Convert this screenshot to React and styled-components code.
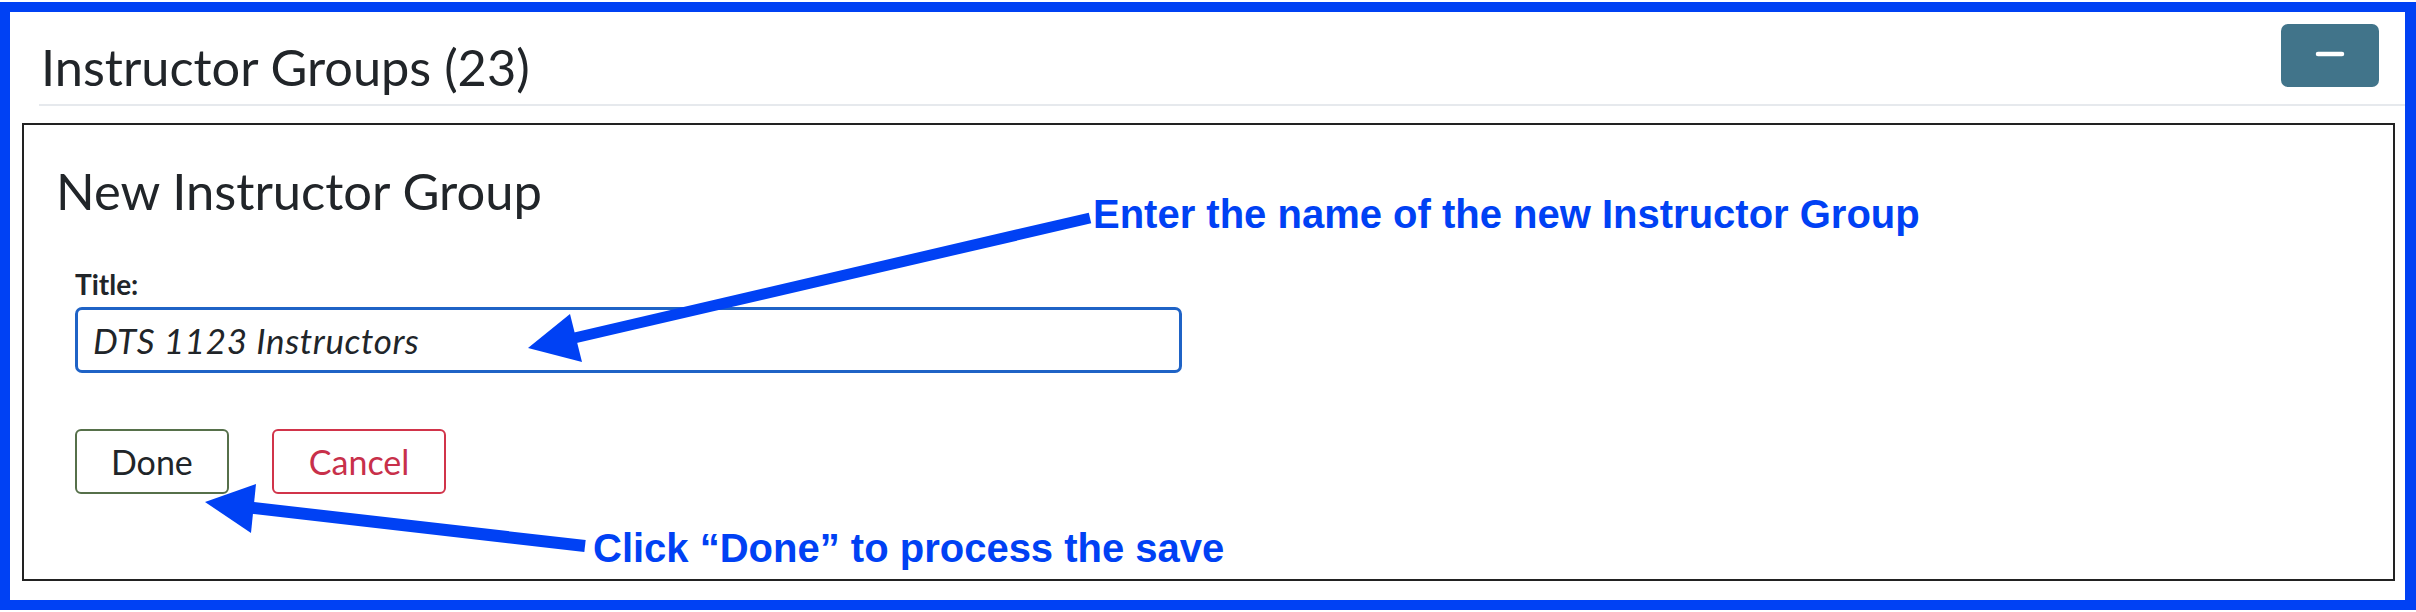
import styled, { createGlobalStyle } from 'styled-components'

const GlobalStyle = createGlobalStyle`
  html, body {
    margin: 0;
    padding: 0;
    background: #fff;
  }
  body {
    font-family: Lato, "Noto Sans", sans-serif;
    color: #212529;
  }
`

const Page = styled.div`
  position: relative;
  width: 2416px;
  height: 612px;
  padding-top: 2px;
  box-sizing: border-box;
`

const Frame = styled.div`
  height: 608px;
  box-sizing: border-box;
  border-style: solid;
  border-color: #0041f4;
  border-width: 10px 11px 10px 10px;
  display: flex;
  flex-direction: column;
`

const Header = styled.div`
  display: flex;
  justify-content: space-between;
  align-items: flex-start;
  height: 92px;
  margin-left: 29px;
  padding: 0 26px 0 2px;
  border-bottom: 2px solid #e6e9ed;
`

const Title = styled.h1`
  margin: 0;
  padding-top: 29px;
  font-size: 50.5px;
  font-weight: 400;
  line-height: 51px;
`

const CollapseButton = styled.button`
  margin-top: 12px;
  width: 98px;
  height: 63px;
  border: 0;
  border-radius: 7px;
  background: #41748a;
  display: flex;
  align-items: center;
  justify-content: center;
  padding: 0 0 4px;
`

const Card = styled.div`
  margin: 17px 10px 0 12px;
  height: 458px;
  box-sizing: border-box;
  border: 2px solid #222;
  padding: 0 0 0 32px;
`

const CardTitle = styled.h2`
  margin: 0;
  padding-top: 40px;
  font-size: 50.7px;
  font-weight: 400;
  line-height: 51px;
`

const Form = styled.div`
  margin: 51px 0 0 19px;
  display: flex;
  flex-direction: column;
`

const Label = styled.label`
  font-size: 28px;
  font-weight: 700;
  line-height: 34px;
`

const TitleInput = styled.div`
  margin-top: 6px;
  width: 1107px;
  height: 66px;
  box-sizing: border-box;
  border: 3px solid #1f63c6;
  border-radius: 7px;
  padding-left: 15px;
  display: flex;
  align-items: center;
  font-size: 35px;
  font-style: italic;
  letter-spacing: 0.6px;
`

const Actions = styled.div`
  margin-top: 56px;
  display: flex;
  gap: 43px;
`

const Button = styled.button`
  height: 65px;
  padding: 0 ${(p) => p.$pad}px;
  box-sizing: border-box;
  border: 2px solid ${(p) => p.$border};
  border-radius: 6px;
  background: #fff;
  color: ${(p) => p.$color};
  font-family: Lato, "Noto Sans", sans-serif;
  font-size: 34px;
`

const Note = styled.div`
  position: absolute;
  left: ${(p) => p.$x}px;
  top: ${(p) => p.$y}px;
  font-family: "Liberation Sans", Arial, sans-serif;
  font-weight: 700;
  font-size: 40px;
  line-height: 40px;
  color: #0041f4;
  white-space: nowrap;
`

const Overlay = styled.svg`
  position: absolute;
  left: 0;
  top: 0;
  pointer-events: none;
`

const App = () => {
  return (
    <Page>
      <GlobalStyle />
      <Frame>
        <Header>
          <Title>Instructor Groups (23)</Title>
          <CollapseButton aria-label="Collapse">
            <svg width="30" height="6" viewBox="0 0 30 6">
              <line x1="3" y1="3" x2="27" y2="3" stroke="#fff" strokeWidth="4.5" strokeLinecap="round" />
            </svg>
          </CollapseButton>
        </Header>
        <Card>
          <CardTitle>New Instructor Group</CardTitle>
          <Form>
            <Label>Title:</Label>
            <TitleInput>DTS 1123 Instructors</TitleInput>
            <Actions>
              <Button $border="#56704a" $color="#212529" $pad={34}>Done</Button>
              <Button $border="#d1344a" $color="#c8304a" $pad={35}>Cancel</Button>
            </Actions>
          </Form>
        </Card>
      </Frame>

      <Overlay width="2416" height="612" viewBox="0 0 2416 612">
        <line x1="1090" y1="218" x2="570" y2="339" stroke="#0041f4" strokeWidth="11" />
        <polygon points="528,348 570,314 582,362" fill="#0041f4" />
        <line x1="585" y1="546" x2="245" y2="507" stroke="#0041f4" strokeWidth="12" />
        <polygon points="205,502 256,484 251,533" fill="#0041f4" />
      </Overlay>

      <Note $x={1093} $y={194}>Enter the name of the new Instructor Group</Note>
      <Note $x={593} $y={528}>Click “Done” to process the save</Note>
    </Page>
  )
}

export default App
